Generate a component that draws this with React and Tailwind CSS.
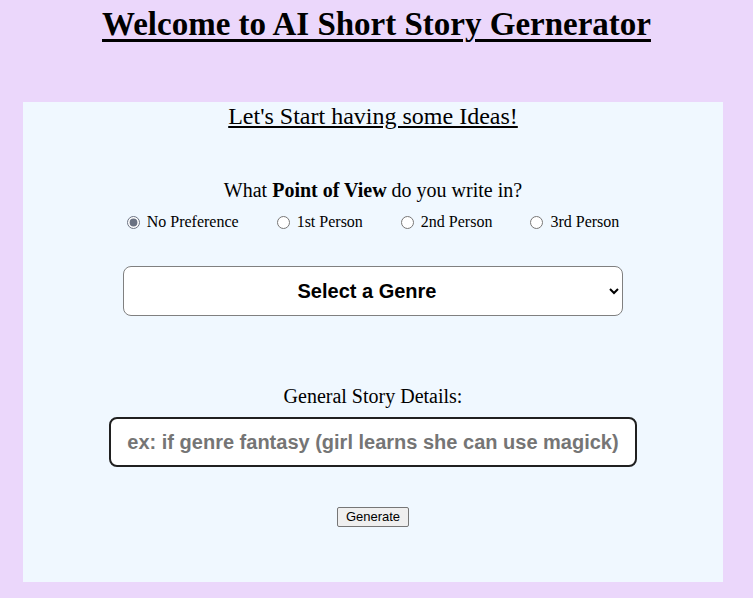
import { useState } from 'react';

const POV = ['No Preference', '1st Person', '2nd Person', '3rd Person'];

export default function App() {
  const [pov, setPov] = useState('No Preference');

  return (
    <div className="min-h-[598px] bg-[#ebd7fb] text-black" style={{ fontFamily: '"Liberation Serif", serif' }}>
      <h1 className="text-center pt-[4px] text-[33px] font-bold underline leading-[40px] decoration-[3px] underline-offset-[4px]">
        Welcome to AI Short Story Gernerator
      </h1>

      <div className="ml-[23px] w-[700px] mt-[58px] h-[480px] bg-[#f0f8ff] flex flex-col items-center">
        <p className="text-[24px] leading-[24px] mt-[2px] underline">Let's Start having some Ideas!</p>

        <p className="text-[20px] leading-[24px] mt-[50px]">
          What <b>Point of View</b> do you write in?
        </p>

        <div className="flex gap-[38px] mt-[11px] text-[16px] leading-[18px]">
          {POV.map((p) => (
            <label key={p} className="flex items-center gap-[7px]">
              <input
                type="radio"
                name="pov"
                checked={pov === p}
                onChange={() => setPov(p)}
                className="w-[13px] h-[13px] accent-gray-500 m-0"
              />
              {p}
            </label>
          ))}
        </div>

        <select
          className="mt-[35px] w-[500px] h-[50px] rounded-lg border border-[#808080] bg-white text-center text-[20px] font-bold px-2"
          style={{ fontFamily: '"Liberation Sans", Arial, sans-serif' }}
        >
          <option>Select a Genre</option>
          <option>Fantasy</option>
          <option>Sci-Fi</option>
          <option>Mystery</option>
        </select>

        <p className="text-[20px] leading-[24px] mt-[68px]">General Story Details:</p>

        <input
          type="text"
          placeholder="ex: if genre fantasy (girl learns she can use magick)"
          className="mt-[9px] w-[528px] h-[50px] rounded-lg border-2 border-[#202020] bg-white text-center text-[20px] font-bold placeholder:text-[#757575] px-3"
          style={{ fontFamily: '"Liberation Sans", Arial, sans-serif' }}
        />

        <button
          className="mt-[40px] h-[20px] px-[8px] text-[13px] leading-[16px] bg-[#efefef] border border-[#767676] rounded-[2px]"
          style={{ fontFamily: '"Liberation Sans", Arial, sans-serif' }}
        >
          Generate
        </button>
      </div>
    </div>
  );
}
